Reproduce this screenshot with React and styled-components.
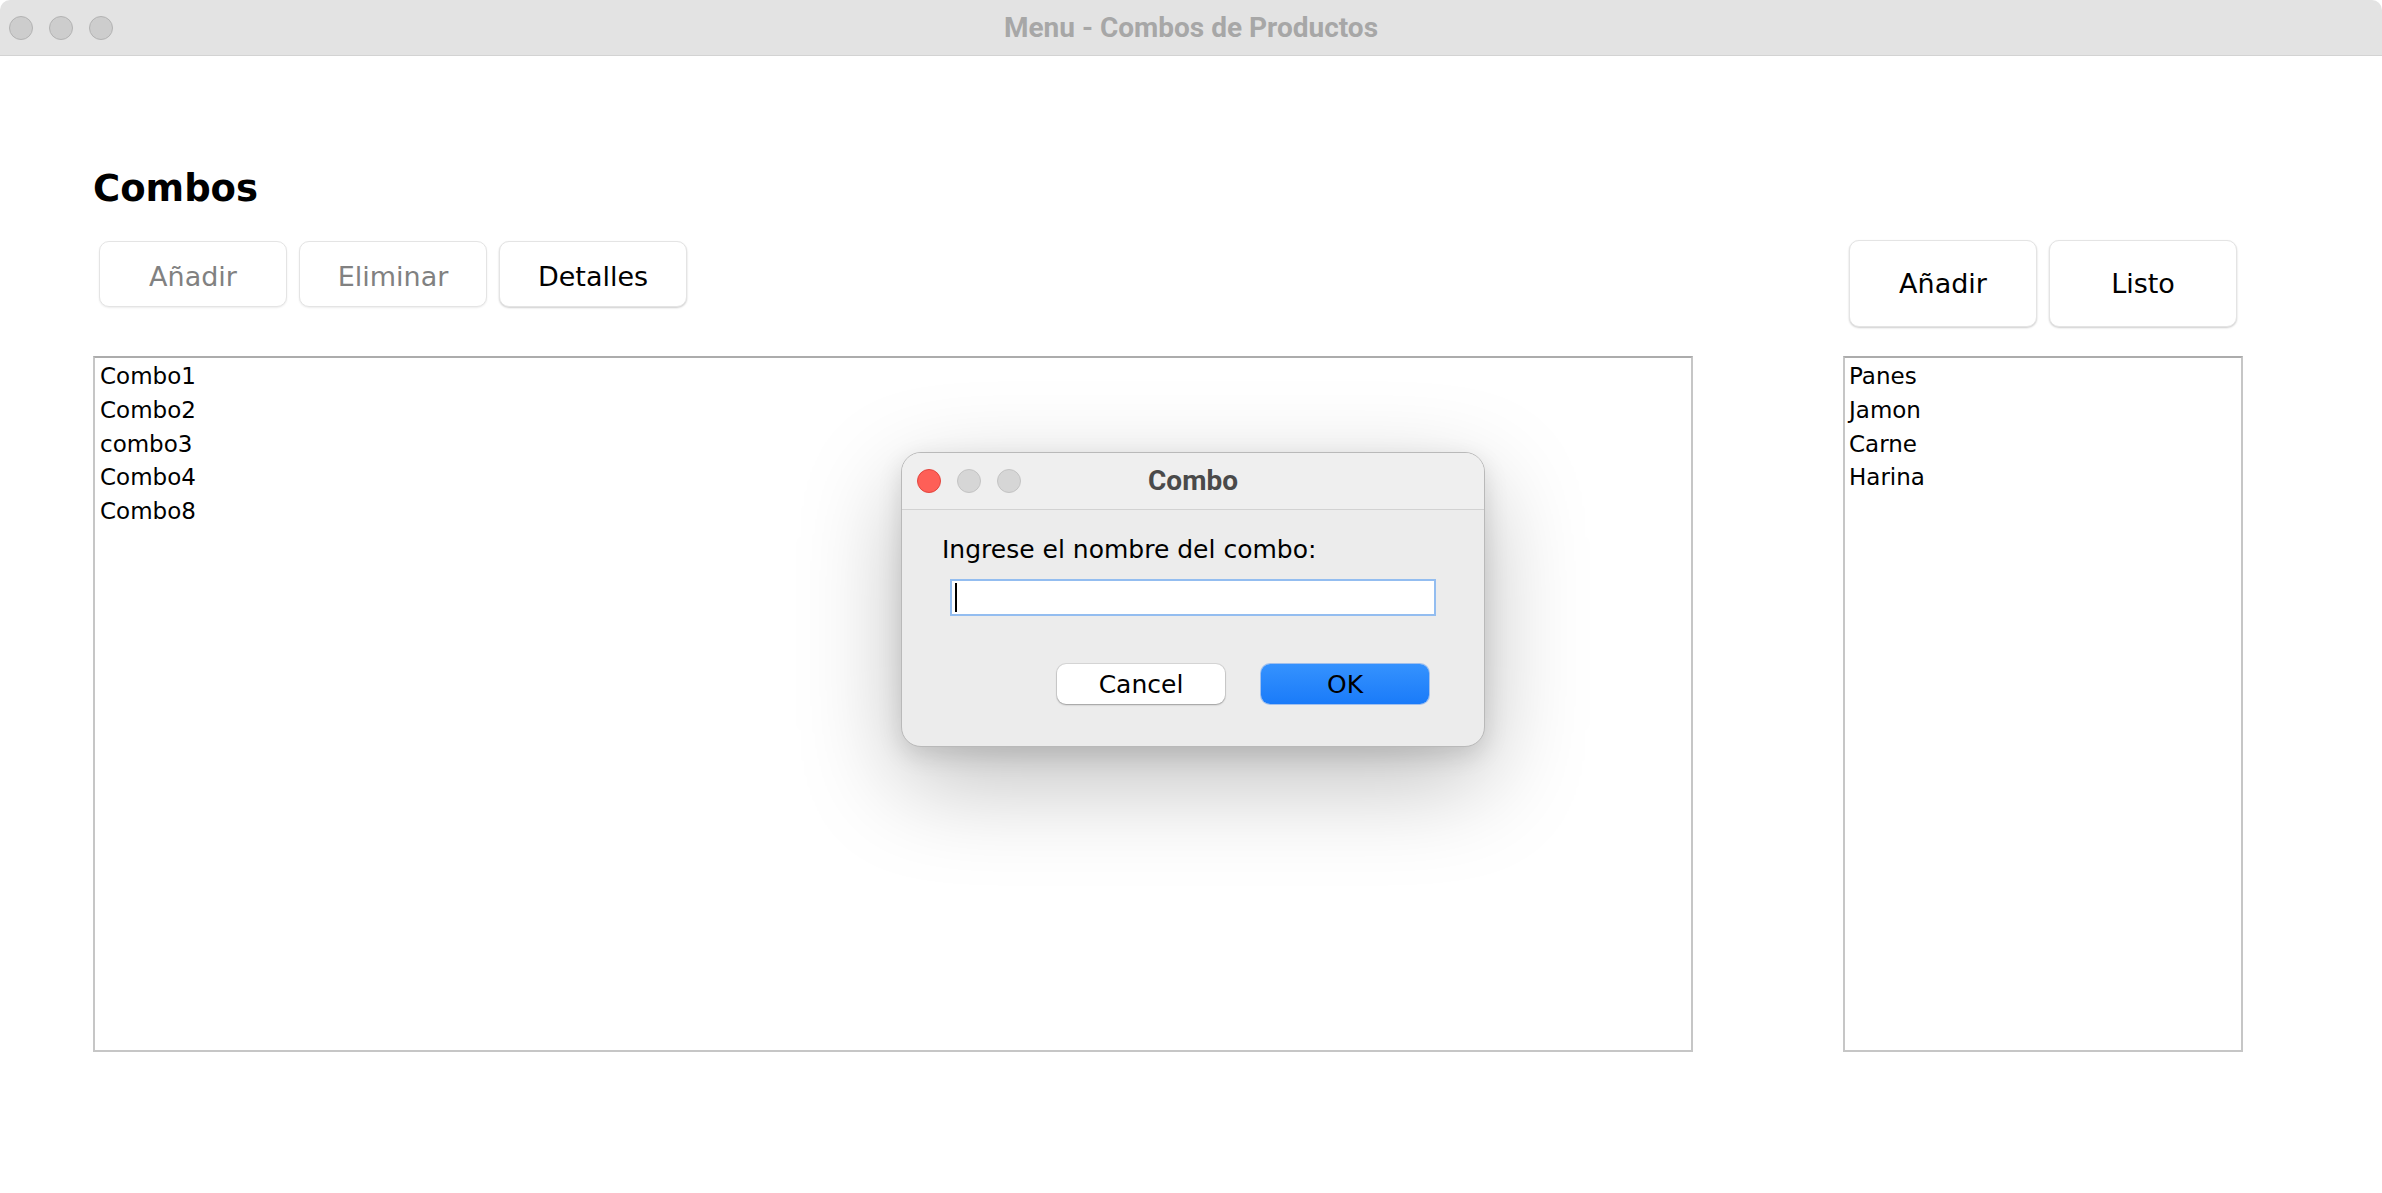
import React from "react";
import styled, { createGlobalStyle } from "styled-components";

const GlobalStyle = createGlobalStyle`
  html, body {
    margin: 0;
    padding: 0;
    background: #ffffff;
  }
  body {
    font-family: "DejaVu Sans", "Liberation Sans", sans-serif;
    color: #000;
  }
`;

const combos = ["Combo1", "Combo2", "combo3", "Combo4", "Combo8"];
const productos = ["Panes", "Jamon", "Carne", "Harina"];

const Window = styled.div`
  position: relative;
  width: 2382px;
  height: 1193px;
  background: #fff;
  overflow: hidden;
  border-radius: 10px 10px 0 0;
`;

const TitleBar = styled.div`
  position: relative;
  display: flex;
  align-items: center;
  justify-content: center;
  height: ${(p) => (p.$dialog ? "56px" : "55px")};
  background: ${(p) => (p.$dialog ? "#efefef" : "#e3e3e3")};
  border-bottom: 1px solid ${(p) => (p.$dialog ? "#d2d2d2" : "#d3d3d3")};
`;

const Lights = styled.div`
  position: absolute;
  left: ${(p) => p.$left}px;
  top: 0;
  bottom: 0;
  display: flex;
  align-items: center;
  gap: 16px;
`;

const Light = styled.span`
  width: 22px;
  height: 22px;
  border-radius: 50%;
  background: ${(p) => p.$fill};
  border: 1px solid ${(p) => p.$edge};
`;

const TitleText = styled.div`
  font-family: Roboto, "Liberation Sans", sans-serif;
  font-weight: 700;
  font-size: 28px;
  line-height: 54px;
  color: ${(p) => (p.$dialog ? "#4a4a4a" : "#a7a7a7")};
`;

const Content = styled.div`
  display: grid;
  grid-template-columns: 1600px 400px;
  grid-template-rows: auto 696px;
  column-gap: 150px;
  padding: 111px 0 0 93px;
`;

const TopLeft = styled.div`
  display: flex;
  flex-direction: column;
  gap: 30px;
  padding-bottom: 49px;
`;

const Heading = styled.h1`
  margin: 0;
  font-family: "DejaVu Sans", sans-serif;
  font-weight: 700;
  font-size: 37px;
  line-height: 44px;
`;

const ButtonRow = styled.div`
  display: flex;
  gap: 12px;
  padding: 0 6px;
  align-self: ${(p) => (p.$end ? "end" : "start")};
  margin-bottom: ${(p) => (p.$end ? "29px" : "0")};
`;

const SwingButton = styled.button`
  display: flex;
  align-items: center;
  justify-content: center;
  width: 188px;
  height: ${(p) => (p.$tall ? "87px" : "66px")};
  padding: ${(p) => (p.$tall ? "0" : "5px 0 0")};
  background: #fff;
  border: 1px solid #e4e4e4;
  border-radius: 10px;
  box-shadow: 0 1px 2px rgba(0, 0, 0, ${(p) => (p.$disabled ? 0.08 : 0.2)});
  font-family: "DejaVu Sans", sans-serif;
  font-size: 27px;
  color: ${(p) => (p.$disabled ? "#818181" : "#000")};
`;

const ListBox = styled.div`
  box-sizing: border-box;
  height: 696px;
  background: #fff;
  border: 2px solid #c6c6c6;
  border-top-color: #acacac;
  padding: 2px 0 0 ${(p) => p.$inset}px;
  font-family: "DejaVu Sans", sans-serif;
  font-size: 23px;
  line-height: 33.75px;
`;

const ListItem = styled.div`
  white-space: nowrap;
`;

const Dialog = styled.div`
  position: absolute;
  left: 901px;
  top: 452px;
  width: 584px;
  height: 295px;
  box-sizing: border-box;
  display: flex;
  flex-direction: column;
  background: #ececec;
  border: 1px solid #b9b9b9;
  border-radius: 20px;
  overflow: hidden;
  box-shadow: 0 34px 100px rgba(0, 0, 0, 0.26), 0 8px 24px rgba(0, 0, 0, 0.12);
`;

const DialogBody = styled.div`
  display: flex;
  flex-direction: column;
  padding: 25px 55px 0 40px;
`;

const Prompt = styled.div`
  font-size: 25px;
  line-height: 30px;
`;

const Field = styled.div`
  display: flex;
  align-items: center;
  box-sizing: border-box;
  width: 486px;
  height: 37px;
  margin: 14px 0 0 8px;
  padding-left: 3px;
  background: #fff;
  border: 2px solid #93bdf0;
`;

const Caret = styled.span`
  width: 2px;
  height: 29px;
  background: #000;
`;

const DialogActions = styled.div`
  display: flex;
  justify-content: flex-end;
  gap: 36px;
  margin-top: 48px;
`;

const DialogButton = styled.button`
  width: 168px;
  height: 40px;
  padding: 0;
  border: none;
  border-radius: 9px;
  font-family: "DejaVu Sans", sans-serif;
  font-size: 25px;
  color: #000;
  background: ${(p) =>
    p.$primary ? "linear-gradient(#3592fe, #1a7bf9)" : "#ffffff"};
  box-shadow: ${(p) =>
    p.$primary
      ? "0 0 0 1px rgba(20, 110, 240, 0.35)"
      : "0 0 0 1px rgba(0, 0, 0, 0.09), 0 1px 2px rgba(0, 0, 0, 0.28)"};
`;

function TrafficLights({ left, active }) {
  return (
    <Lights $left={left}>
      <Light
        $fill={active ? "#fe5f57" : "#cdcdcd"}
        $edge={active ? "#e2463f" : "#b3b3b3"}
      />
      <Light $fill={active ? "#d6d6d6" : "#cdcdcd"} $edge={active ? "#c3c3c3" : "#b3b3b3"} />
      <Light $fill={active ? "#d6d6d6" : "#cdcdcd"} $edge={active ? "#c3c3c3" : "#b3b3b3"} />
    </Lights>
  );
}

function NameDialog() {
  return (
    <Dialog>
      <TitleBar $dialog>
        <TrafficLights left={15} active />
        <TitleText $dialog>Combo</TitleText>
      </TitleBar>
      <DialogBody>
        <Prompt>Ingrese el nombre del combo:</Prompt>
        <Field>
          <Caret />
        </Field>
        <DialogActions>
          <DialogButton>Cancel</DialogButton>
          <DialogButton $primary>OK</DialogButton>
        </DialogActions>
      </DialogBody>
    </Dialog>
  );
}

export default function App() {
  return (
    <>
      <GlobalStyle />
      <Window>
        <TitleBar>
          <TrafficLights left={9} />
          <TitleText>Menu - Combos de Productos</TitleText>
        </TitleBar>
        <Content>
          <TopLeft>
            <Heading>Combos</Heading>
            <ButtonRow>
              <SwingButton $disabled>Añadir</SwingButton>
              <SwingButton $disabled>Eliminar</SwingButton>
              <SwingButton>Detalles</SwingButton>
            </ButtonRow>
          </TopLeft>
          <ButtonRow $end>
            <SwingButton $tall>Añadir</SwingButton>
            <SwingButton $tall>Listo</SwingButton>
          </ButtonRow>
          <ListBox $inset={5}>
            {combos.map((c) => (
              <ListItem key={c}>{c}</ListItem>
            ))}
          </ListBox>
          <ListBox $inset={4}>
            {productos.map((p) => (
              <ListItem key={p}>{p}</ListItem>
            ))}
          </ListBox>
        </Content>
        <NameDialog />
      </Window>
    </>
  );
}
